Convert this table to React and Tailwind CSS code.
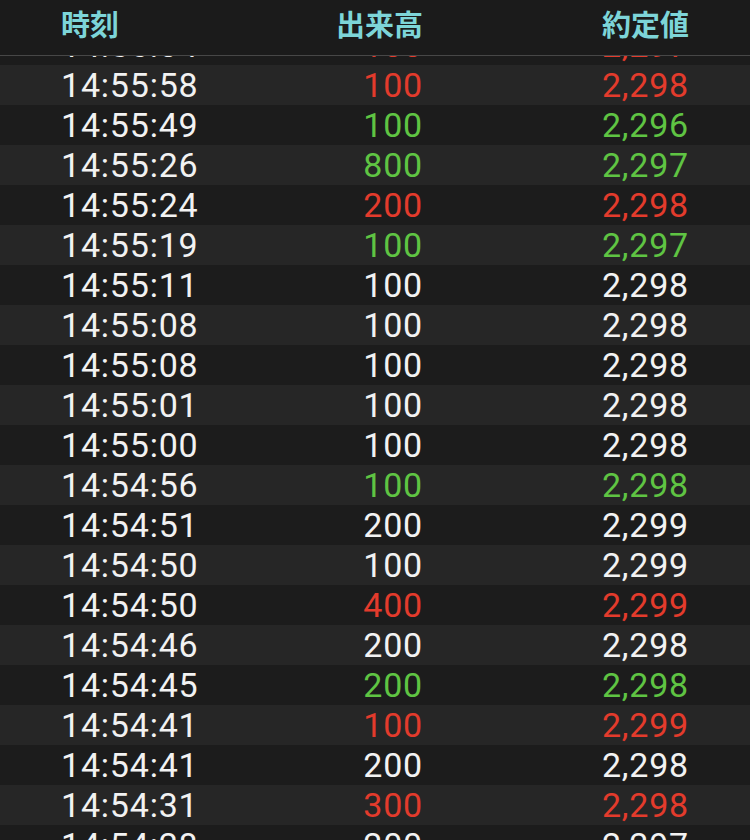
const RED = 'text-[#e33b2c]'
const GREEN = 'text-[#5fc443]'
const WHITE = 'text-[#f2f2f2]'

const trades = [
    ['14:56:04', '100', '2,297', RED, RED],
    ['14:55:58', '100', '2,298', RED, RED],
    ['14:55:49', '100', '2,296', GREEN, GREEN],
    ['14:55:26', '800', '2,297', GREEN, GREEN],
    ['14:55:24', '200', '2,298', RED, RED],
    ['14:55:19', '100', '2,297', GREEN, GREEN],
    ['14:55:11', '100', '2,298', WHITE, WHITE],
    ['14:55:08', '100', '2,298', WHITE, WHITE],
    ['14:55:08', '100', '2,298', WHITE, WHITE],
    ['14:55:01', '100', '2,298', WHITE, WHITE],
    ['14:55:00', '100', '2,298', WHITE, WHITE],
    ['14:54:56', '100', '2,298', GREEN, GREEN],
    ['14:54:51', '200', '2,299', WHITE, WHITE],
    ['14:54:50', '100', '2,299', WHITE, WHITE],
    ['14:54:50', '400', '2,299', RED, RED],
    ['14:54:46', '200', '2,298', WHITE, WHITE],
    ['14:54:45', '200', '2,298', GREEN, GREEN],
    ['14:54:41', '100', '2,299', RED, RED],
    ['14:54:41', '200', '2,298', WHITE, WHITE],
    ['14:54:31', '300', '2,298', RED, RED],
    ['14:54:28', '200', '2,297', WHITE, WHITE],
]

export default function App() {
    return (
        <div className="w-[750px] h-[840px] bg-[#1b1b1b] flex flex-col overflow-hidden">
            {/* header */}
            <div
                className="h-[56px] shrink-0 flex items-center border-b border-[#474747] text-[29px] font-bold text-[#7dd5d8] pb-[7px]"
                style={{ fontFamily: '"Noto Sans CJK JP", "Noto Sans", sans-serif' }}
            >
                <div className="w-[61px]" />
                <div className="w-[141px]">時刻</div>
                <div className="w-[221px] text-right">出来高</div>
                <div className="w-[266px] text-right">約定値</div>
            </div>
            <div className="flex-1 overflow-hidden">
                <div className="-mt-[31px]" style={{ fontFamily: 'Roboto, "Liberation Sans", sans-serif' }}>
                    {trades.map(([time, vol, price, vc, pc], i) => (
                        <div
                            key={i}
                            className={`h-[40px] flex items-center pb-[1px] text-[34px] leading-none tracking-[0.8px] ${i % 2 === 1 ? 'bg-[#262626]' : 'bg-[#1c1c1c]'}`}
                        >
                            <div className="w-[61px]" />
                            <div className="w-[141px] text-[#f2f2f2]">{time}</div>
                            <div className={`w-[221px] text-right ${vc}`}>{vol}</div>
                            <div className={`w-[266px] text-right ${pc}`}>{price}</div>
                        </div>
                    ))}
                </div>
            </div>
        </div>
    )
}
